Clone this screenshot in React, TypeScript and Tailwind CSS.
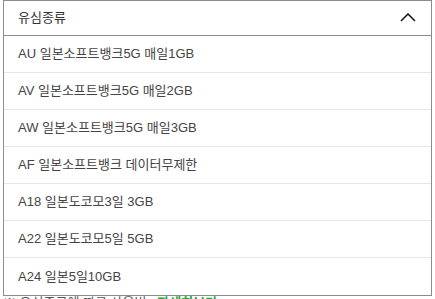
import React from 'react';

const options = [
  'AU 일본소프트뱅크5G 매일1GB',
  'AV 일본소프트뱅크5G 매일2GB',
  'AW 일본소프트뱅크5G 매일3GB',
  'AF 일본소프트뱅크 데이터무제한',
  'A18 일본도코모3일 3GB',
  'A22 일본도코모5일 5GB',
  'A24 일본5일10GB',
];

export default function App() {
  return (
    <div
      className="w-[435px] h-[299px] overflow-hidden bg-white px-[3px] text-[13px] text-[#444]"
      style={{ fontFamily: '"Liberation Sans", "Noto Sans CJK KR", sans-serif' }}
    >
      {/* Select */}
      <div className="relative z-10 border border-[#8c8c8c] bg-white">
        <div className="flex h-[35px] items-center justify-between border-b border-[#8c8c8c] pl-[14px] pr-[15px]">
          <span className="text-[#333]">유심종류</span>
          <svg width="16" height="9" viewBox="0 0 16 9" fill="none" className="mt-[-2px]">
            <path d="M1 8 L8 1 L15 8" stroke="#111" strokeWidth="1.5" />
          </svg>
        </div>
        <ul>
          {options.map((o, i) => (
            <li
              key={o}
              className={`flex h-[37px] items-center pl-[14px] ${i < options.length - 1 ? 'border-b border-[#e6e6e6]' : ''}`}
            >
              {o}
            </li>
          ))}
        </ul>
      </div>

      {/* note under the open menu */}
      <p className="-mt-[3px] whitespace-nowrap text-[13px] text-[#555]">
        ※ 유심종류에 따른 사용법 : <span className="font-bold text-[#2aa43b]">자세히보기</span>
      </p>
    </div>
  );
}
